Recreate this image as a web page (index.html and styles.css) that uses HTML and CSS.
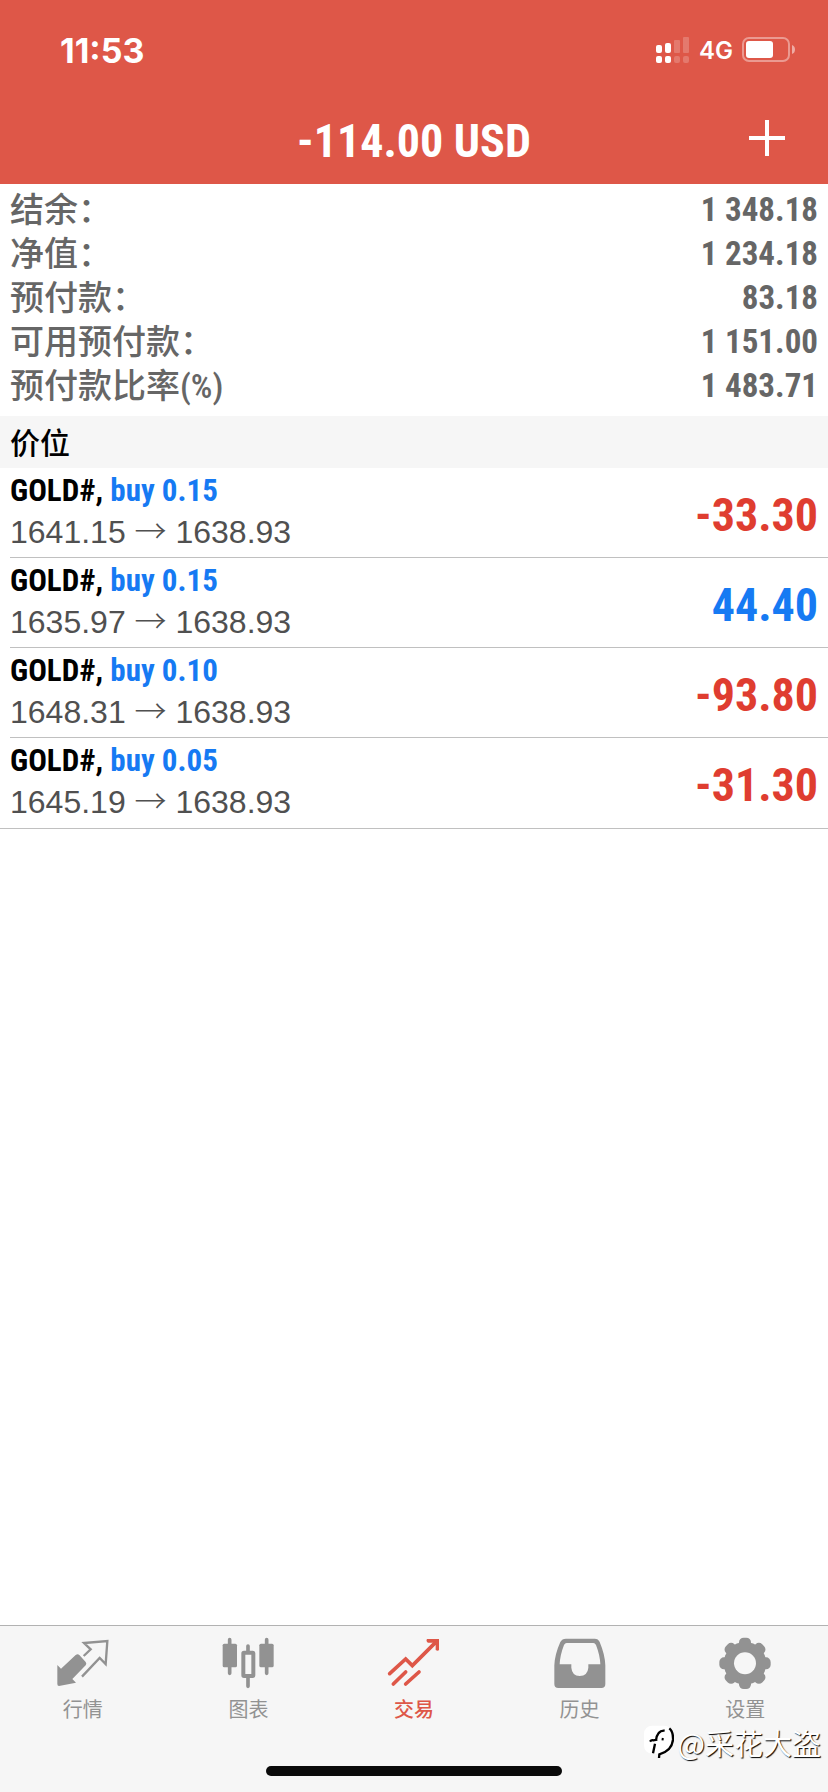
FILE: index.html
```html
<!DOCTYPE html>
<html lang="zh-CN">
<head>
<meta charset="utf-8">
<meta name="viewport" content="width=device-width, initial-scale=1">
<title>交易</title>
<link rel="stylesheet" href="styles.css">
</head>
<body>
<header class="header">
  <div class="status">
    <time class="clock">11:53</time>
    <div class="indicators">
      <svg class="signal" viewBox="0 0 34 27" aria-hidden="true">
        <rect x="0" y="8" width="6" height="8" rx="2"/>
        <rect x="9" y="6" width="6" height="10" rx="2"/>
        <rect x="0" y="19" width="6" height="7" rx="2"/>
        <rect x="9" y="19" width="6" height="7" rx="2"/>
        <g opacity=".2">
          <rect x="18" y="3" width="6" height="13" rx="1"/>
          <rect x="27" y="0" width="6" height="16" rx="1"/>
          <rect x="18" y="19" width="6" height="7" rx="2"/>
          <rect x="27" y="19" width="6" height="7" rx="2"/>
        </g>
      </svg>
      <span class="network">4G</span>
      <svg class="battery" viewBox="0 0 54 26" aria-hidden="true">
        <rect x="1" y="1" width="46" height="23" rx="6" fill="none" stroke="#fff" stroke-width="2" opacity=".4"/>
        <rect x="4" y="4" width="27" height="17" rx="3"/>
        <path d="M50 8q3 1 3 4.500t-3 4.500z" opacity=".5"/>
      </svg>
    </div>
  </div>
  <div class="nav">
    <h1 class="title">-114.00 USD</h1>
    <button class="add" type="button" aria-label="新订单">
      <svg viewBox="0 0 36 36" aria-hidden="true"><path d="M18 0v36M0 18h36" stroke="#fff" stroke-width="4"/></svg>
    </button>
  </div>
</header>
<main class="main">
  <dl class="summary">
    <div class="line"><dt>结余：</dt><dd>1 348.18</dd></div>
    <div class="line"><dt>净值：</dt><dd>1 234.18</dd></div>
    <div class="line"><dt>预付款：</dt><dd>83.18</dd></div>
    <div class="line"><dt>可用预付款：</dt><dd>1 151.00</dd></div>
    <div class="line"><dt>预付款比率(%)</dt><dd>1 483.71</dd></div>
  </dl>
  <h2 class="section">价位</h2>
  <ul class="positions">
    <li class="position">
      <div class="deal"><p class="name">GOLD#, <span class="buy">buy 0.15</span></p><p class="prices">1641.15 <span class="arrow">→</span> 1638.93</p></div>
      <span class="profit loss">-33.30</span>
    </li>
    <li class="position">
      <div class="deal"><p class="name">GOLD#, <span class="buy">buy 0.15</span></p><p class="prices">1635.97 <span class="arrow">→</span> 1638.93</p></div>
      <span class="profit gain">44.40</span>
    </li>
    <li class="position">
      <div class="deal"><p class="name">GOLD#, <span class="buy">buy 0.10</span></p><p class="prices">1648.31 <span class="arrow">→</span> 1638.93</p></div>
      <span class="profit loss">-93.80</span>
    </li>
    <li class="position">
      <div class="deal"><p class="name">GOLD#, <span class="buy">buy 0.05</span></p><p class="prices">1645.19 <span class="arrow">→</span> 1638.93</p></div>
      <span class="profit loss">-31.30</span>
    </li>
  </ul>
</main>
<footer class="footer">
  <nav class="tabs">
    <a class="tab" href="#quotes">
      <svg class="icon" viewBox="80 63 156 162" aria-hidden="true">
        <path d="M81 150L92 161L136 120Q142 116 147 120L166 141Q170 146 166 151L126 192L137 203L86 213Q81 213 81 207Z" fill="currentColor"/>
        <path d="M160 123L181 103L161 84L231 78L226 147L208 129L155 185" fill="none" stroke="currentColor" stroke-width="7"/>
      </svg>
      <span>行情</span>
    </a>
    <a class="tab" href="#charts">
      <svg class="icon" viewBox="577 63 156 162" aria-hidden="true">
        <g fill="currentColor">
          <rect x="579" y="86" width="43" height="71" rx="5"/>
          <rect x="689" y="86" width="43" height="71" rx="5"/>
        </g>
        <path d="M600 74V175M711 74V175M655 93V108M655 188V214" stroke="currentColor" stroke-width="11" stroke-linecap="round"/>
        <rect x="641" y="113" width="30" height="70" rx="2" fill="none" stroke="currentColor" stroke-width="12"/>
      </svg>
      <span>图表</span>
    </a>
    <a class="tab active" href="#trade" aria-current="page">
      <svg class="icon" viewBox="114 63 156 162" aria-hidden="true">
        <path d="M119 176L167 132L187 152L259 80M130 207L167 171M167 207L207 171" fill="none" stroke="currentColor" stroke-width="11" stroke-linecap="round" stroke-linejoin="miter"/>
        <path d="M231 72H267V105Q264 109 257 105V91L248 83H234Q227 79 231 72Z" fill="currentColor"/>
      </svg>
      <span>交易</span>
    </a>
    <a class="tab" href="#history">
      <svg class="icon" viewBox="608 63 156 162" aria-hidden="true">
        <path fill="currentColor" fill-rule="evenodd" d="M644 71H730Q741 71 745 81Q761 119 762 151V207Q762 219 750 219H621Q609 219 609 207V151Q610 119 627 81Q632 71 644 71ZM646 84Q641 84 638 90Q626 121 625 148H660V158Q662 182 685 183Q709 182 711 158V148H747Q746 121 734 90Q731 84 726 84Z"/>
      </svg>
      <span>历史</span>
    </a>
    <a class="tab" href="#settings">
      <svg class="icon" viewBox="356 63 156 162" aria-hidden="true">
        <g fill="currentColor">
          <circle cx="434" cy="145" r="64"/>
          <rect id="tooth" x="416" y="68" width="36" height="154" rx="14"/>
          <use href="#tooth" transform="rotate(45 434 145)"/>
          <use href="#tooth" transform="rotate(90 434 145)"/>
          <use href="#tooth" transform="rotate(135 434 145)"/>
        </g>
        <circle cx="434" cy="145" r="33" fill="#f6f6f6"/>
      </svg>
      <span>设置</span>
    </a>
  </nav>
  <div class="home"></div>
  <div class="watermark">
    <svg class="mark" viewBox="0 0 90 102" aria-hidden="true">
      <rect x="0" y="2" width="84" height="84" rx="24" fill="#fff"/>
      <path d="M76 10Q88 20 87 44Q84 78 46 88L45 99" fill="none" stroke="#000" stroke-width="7"/>
      <path d="M62 17Q40 15 36 46M33 56L27 85M18 50Q22 44 28 46L40 44M53 42L59 43" fill="none" stroke="#000" stroke-width="7"/>
    </svg>
    <span>@采花大盗</span>
  </div>
</footer>
</body>
</html>
```
FILE: styles.css
```css
* {
  box-sizing: border-box;
  margin: 0;
  padding: 0;
}

body {
  display: flex;
  flex-direction: column;
  min-height: 100vh;
  background: #fff;
  color: #000;
  font-family: "Liberation Sans", "Noto Sans CJK SC", sans-serif;
}

svg {
  display: block;
  fill: #fff;
}

.header {
  background: #de5748;
  color: #fff;
}

.status {
  display: flex;
  align-items: center;
  justify-content: space-between;
  height: 100px;
  padding: 0 32px 0 60px;
  font-family: Inter, sans-serif;
}

.clock {
  font-size: 34px;
  font-weight: 700;
}

.indicators {
  display: flex;
  align-items: center;
  gap: 9px;
}

.signal {
  width: 34px;
  height: 27px;
}

.network {
  font-size: 24px;
  font-weight: 600;
}

.battery {
  width: 54px;
  height: 26px;
}

.nav {
  display: grid;
  grid-template-columns: 1fr auto 1fr;
  align-items: center;
  height: 84px;
  padding: 0 43px 8px;
}

.title {
  grid-column: 2;
  padding-top: 6px;
  font-family: "Roboto Condensed", "Liberation Sans", sans-serif;
  font-size: 46px;
  font-weight: 700;
  line-height: 60px;
}

.add {
  justify-self: end;
  width: 36px;
  height: 36px;
  border: 0;
  background: none;
}

.main {
  flex: 1;
}

.summary {
  padding: 4px 10px 8px;
  color: #666;
  font-family: "Roboto Condensed", "Noto Sans CJK SC", sans-serif;
  line-height: 44px;
}

.line {
  display: flex;
  justify-content: space-between;
  height: 44px;
}

.line dt {
  font-size: 34px;
  font-weight: 500;
}

.line dd {
  font-size: 33px;
  font-weight: 700;
}

.section {
  padding: 0 10px 2px;
  background: #f6f6f6;
  font-family: "Noto Sans CJK SC", sans-serif;
  font-size: 30px;
  font-weight: 500;
  line-height: 50px;
}

.positions {
  border-bottom: 1px solid #c0c0c0;
  list-style: none;
}

.position {
  display: flex;
  align-items: center;
  justify-content: space-between;
  height: 90px;
  margin-left: 10px;
  padding-right: 10px;
}

.position:not(:last-child) {
  border-bottom: 1px solid #c0c0c0;
}

.deal {
  padding-bottom: 2px;
}

.name {
  font-family: "Roboto Condensed", "Liberation Sans", sans-serif;
  font-size: 31px;
  font-weight: 700;
  line-height: 40px;
}

.buy {
  color: #167af3;
}

.prices {
  color: #505050;
  font-size: 32px;
  line-height: 42px;
}

.arrow {
  font-family: "Noto Sans CJK SC", sans-serif;
  font-weight: 300;
  line-height: 1;
}

.profit {
  padding-top: 4px;
  font-family: "Roboto Condensed", "Liberation Sans", sans-serif;
  font-size: 46px;
  font-weight: 700;
}

.loss {
  color: #df3d30;
}

.gain {
  color: #167af3;
}

.footer {
  position: relative;
  padding-bottom: 16px;
  border-top: 1px solid #b2b2b2;
  background: #f6f6f6;
}

.tabs {
  display: grid;
  grid-template-columns: repeat(5, 1fr);
  height: 140px;
  padding-top: 10px;
}

.tab {
  display: flex;
  flex-direction: column;
  align-items: center;
  gap: 4px;
  color: #929292;
  font-family: "Noto Sans CJK SC", sans-serif;
  font-size: 20px;
  line-height: 30px;
  text-decoration: none;
}

.active {
  color: #de5748;
  font-weight: 500;
}

.icon {
  width: 52px;
  height: 54px;
  overflow: visible;
}

.home {
  width: 296px;
  height: 10px;
  margin: 0 auto;
  border-radius: 5px;
  background: #0a0a0a;
}

.watermark {
  position: absolute;
  right: 7px;
  bottom: 30px;
  display: flex;
  align-items: center;
  gap: 4px;
  color: #fff;
  font-family: "Noto Sans CJK SC", sans-serif;
  font-size: 29px;
  line-height: 40px;
  text-shadow: 1px 1px 1px #000;
}

.mark {
  width: 30px;
  height: 34px;
}
```
